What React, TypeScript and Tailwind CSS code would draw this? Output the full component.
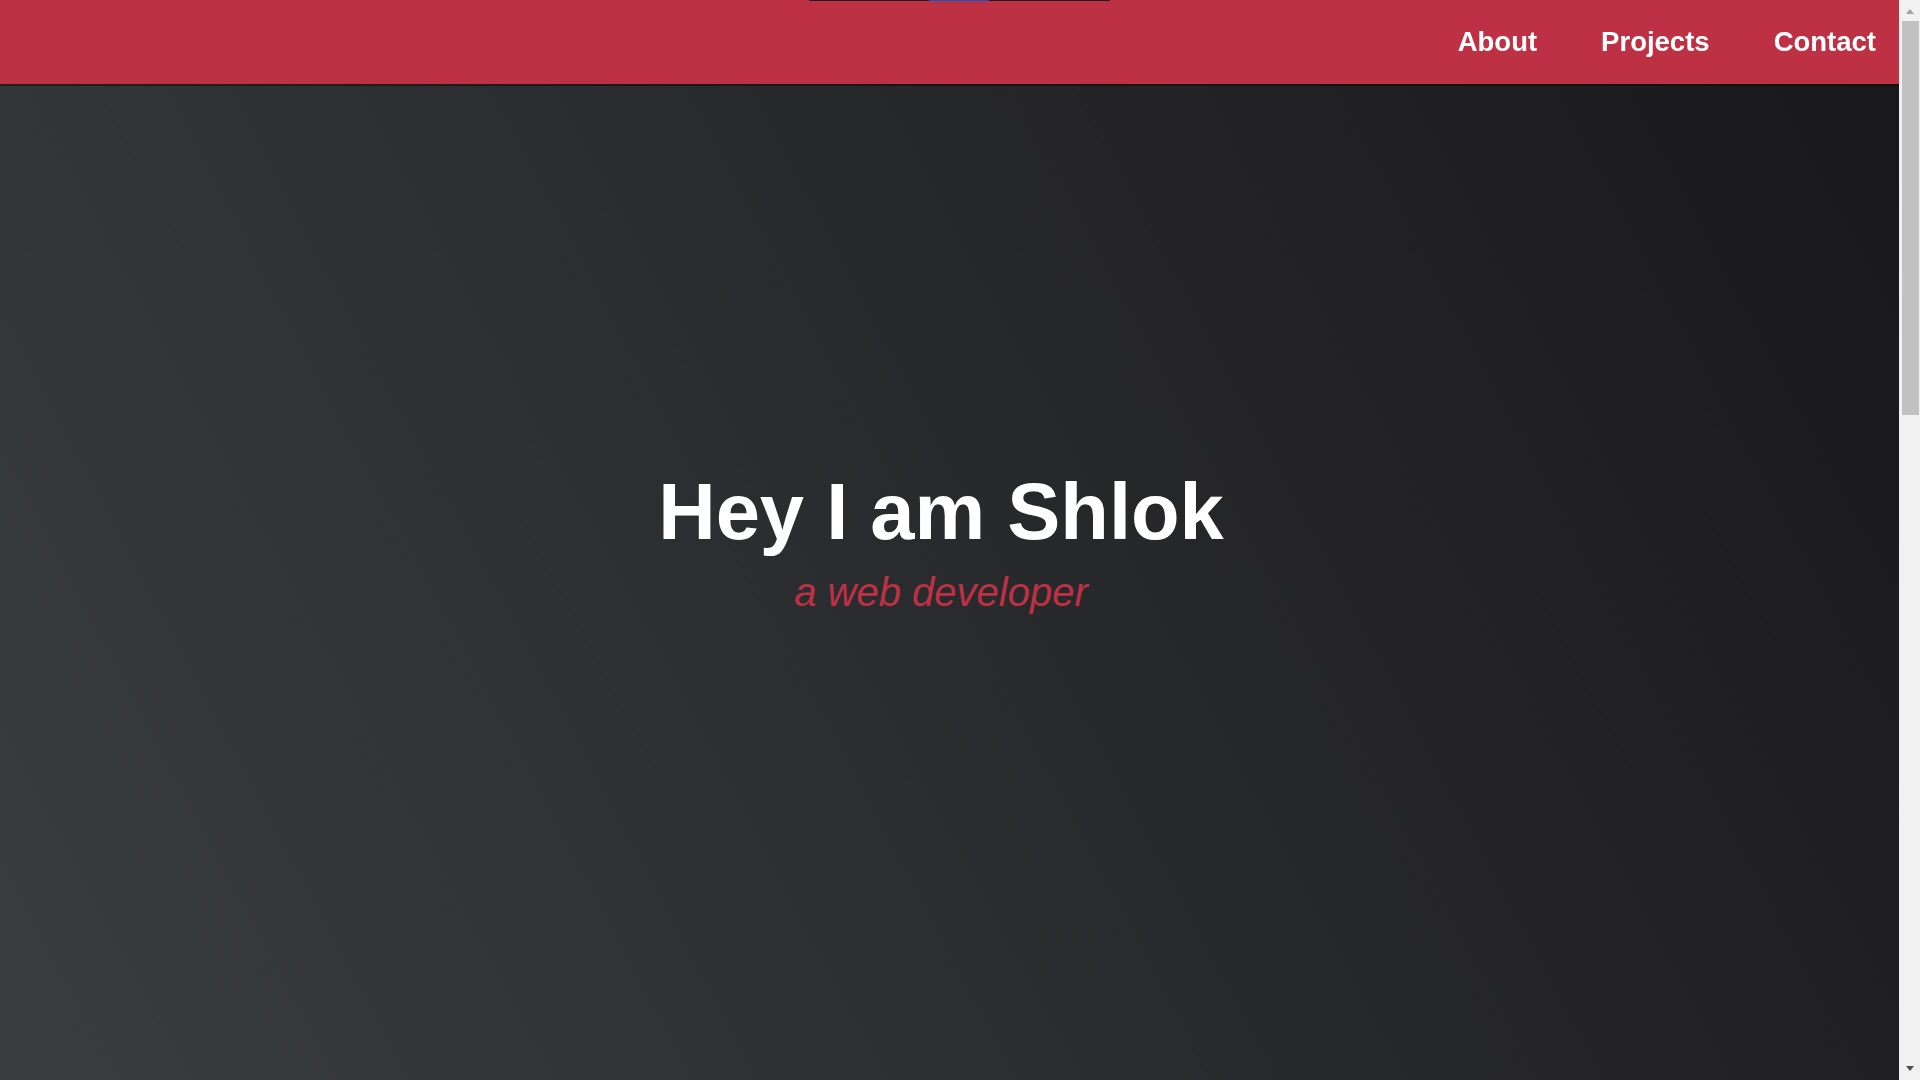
import React from 'react'

const links = ['About', 'Projects', 'Contact']

// la barre de défilement de la capture, dessinée par-dessus la page
function FakeScrollbar() {
  return (
    <div className="fixed right-0 top-0 z-50 flex h-screen w-[21px] flex-col items-center bg-[#f1f1f1]">
      <div className="mt-[9px] h-0 w-0 border-x-[4.5px] border-b-[5px] border-x-transparent border-b-[#a3a3a3]" />
      <div className="ml-[1px] mt-[7px] h-[394px] w-[17px] bg-[#c1c1c1]" />
      <div className="mt-auto mb-[9px] h-0 w-0 border-x-[4.5px] border-t-[5px] border-x-transparent border-t-[#505050]" />
    </div>
  )
}

export default function App() {
  return (
    <div className="min-h-screen mr-[21px] bg-[#303841] font-['Liberation_Sans',Arial,sans-serif] text-white">
      {/* barre de test en haut */}
      <div className="fixed left-[809px] top-0 z-50 flex h-px w-[301px] bg-[#1d1e22]">
        <div className="ml-[120px] h-px w-[60px] bg-[#0a5cc8]" />
      </div>

      <nav className="fixed left-0 right-[21px] top-0 z-40 flex h-[84px] items-center justify-end gap-[64px] bg-[#be3144] pr-[23px] shadow-[0_2px_0_rgba(0,0,0,0.4)]">
        {links.map((l) => (
          <a key={l} href={`#${l.toLowerCase()}`} className="text-[27.5px] font-bold leading-none text-white">
            {l}
          </a>
        ))}
      </nav>

      <section className="flex h-screen flex-col items-center justify-center bg-black bg-[linear-gradient(62deg,#3a3d40_0%,#181719_100%)] pt-[4px] pr-[17px]">
        <h1 className="text-[79.5px] font-bold leading-[1.1] text-white">
          Hey I am Shlok
        </h1>
        <p className="mt-[12px] text-[40px] italic leading-[1.2] text-[#be3144]">
          a web developer
        </p>
      </section>

      <FakeScrollbar />
    </div>
  )
}
